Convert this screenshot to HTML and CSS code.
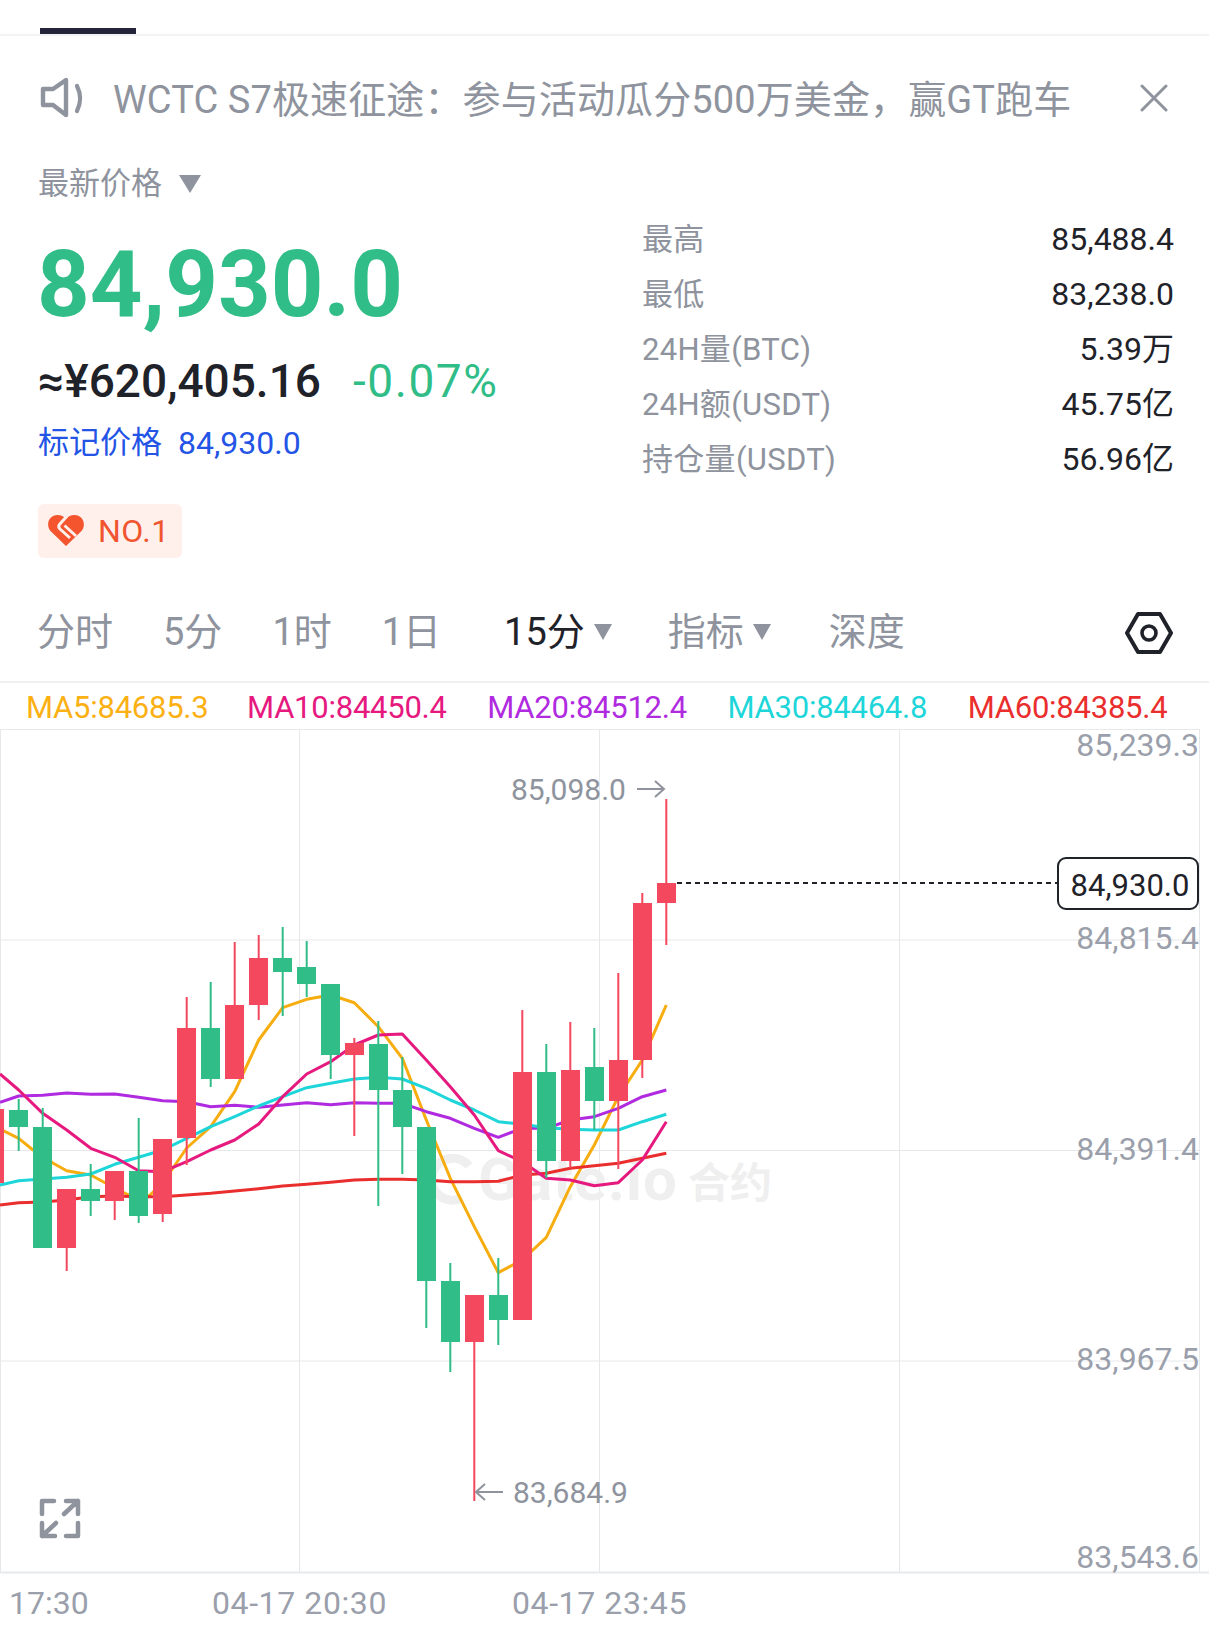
FILE: index.html
```html
<!DOCTYPE html>
<html lang="zh">
<head>
    <meta charset="UTF-8">
    <meta name="viewport" content="width=device-width, initial-scale=1.0">
    <title>BTC 合约</title>
    <link rel="stylesheet" href="styles.css">
</head>
<body>
    <div class="tab-bar"><div class="tab-indicator"></div></div>

    <div class="notice">
        <svg class="notice-icon" width="46" height="42" viewBox="0 0 46 42">
            <path d="M3 12H13L26 3V38L13 28H3z" fill="none" stroke="#8e939d" stroke-width="4.400" stroke-linejoin="round"/>
            <path d="M37 9C41 17 41 26 37 34" fill="none" stroke="#8e939d" stroke-width="4.200" stroke-linecap="round"/>
        </svg>
        <span class="notice-text">WCTC S7极速征途：参与活动瓜分500万美金，赢GT跑车</span>
        <svg class="notice-close" width="28" height="28" viewBox="0 0 28 28">
            <path d="M2 2l24 24M26 2L2 26" stroke="#8e939d" stroke-width="3" stroke-linecap="round"/>
        </svg>
    </div>

    <div class="quote">
        <div class="quote-left">
            <div class="price-label">最新价格<i class="caret caret-lg"></i></div>
            <div class="price-big">84,930.0</div>
            <div class="price-sub"><span class="price-cny">≈¥620,405.16</span><span class="price-change">-0.07%</span></div>
            <div class="price-mark"><span>标记价格</span><span class="mark-value">84,930.0</span></div>
            <div class="badge">
                <svg width="36" height="32" viewBox="0 0 36 32">
                    <path d="M18 31L3 16.500C-3 10 1 0 9.500 0C13 0 16 1.500 18 4C20 1.500 23 0 26.500 0C35 0 39 10 33 16.500z" fill="#f4552e"/>
                    <path d="M19 1L11.500 9.500C10 11.500 10.500 12.500 12 14L22 23" fill="none" stroke="#fff0eb" stroke-width="3"/>
                    <path d="M16.500 10.500L28 21" fill="none" stroke="#fff0eb" stroke-width="3"/>
                </svg>
                <span>NO.1</span>
            </div>
        </div>
        <div class="stats">
            <div class="stat-row"><span>最高</span><b>85,488.4</b></div>
            <div class="stat-row"><span>最低</span><b>83,238.0</b></div>
            <div class="stat-row"><span>24H量(BTC)</span><b>5.39万</b></div>
            <div class="stat-row"><span>24H额(USDT)</span><b>45.75亿</b></div>
            <div class="stat-row"><span>持仓量(USDT)</span><b>56.96亿</b></div>
        </div>
    </div>

    <div class="periods">
        <span>分时</span>
        <span>5分</span>
        <span>1时</span>
        <span>1日</span>
        <span class="period-active">15分<i class="caret"></i></span>
        <span class="period-indicator">指标<i class="caret"></i></span>
        <span class="period-depth">深度</span>
        <svg class="settings" width="48" height="42" viewBox="0 0 48 42">
            <path d="M13 2h22L46 21 35 40H13L2 21z" fill="none" stroke="#1f2229" stroke-width="4" stroke-linejoin="round"/>
            <circle cx="24" cy="21" r="7" fill="none" stroke="#1f2229" stroke-width="3.600"/>
        </svg>
    </div>

    <div class="ma-row">
        <span class="ma5">MA5:84685.3</span>
        <span class="ma10">MA10:84450.4</span>
        <span class="ma20">MA20:84512.4</span>
        <span class="ma30">MA30:84464.8</span>
        <span class="ma60">MA60:84385.4</span>
    </div>

    <svg class="chart" width="1209" height="902" viewBox="0 729 1209 902">
        <!-- сетка -->
        <g class="grid">
            <path d="M0 729.500H1199M0 940H1199M0 1150.500H1199M0 1361H1199"/>
            <path d="M0.500 729V1572M299.500 729V1572M599.500 729V1572M899.500 729V1572M1199.500 729V1572"/>
        </g>
        <path class="grid-bottom" d="M0 1572.500H1209"/>

        <!-- watermark -->
        <g class="watermark">
            <path d="M469 1166A21 21 0 1 0 462 1198" fill="none" stroke="#efefef" stroke-width="9"/>
            <text x="478" y="1200" class="wm-text">Gate.io</text>
            <text x="688" y="1198" class="wm-cn">合约</text>
        </g>

        <!-- MA -->
        <polyline class="ma-line l5" points="0,1129 18.700,1138.300 33,1150 42.700,1155 52.700,1163 66.700,1170.700 90.700,1175 114.700,1188 138.700,1200 150,1195 162.700,1183 186.700,1148 210.700,1126.700 234.700,1091.700 258.700,1040 282.700,1007.700 306.700,999.300 330.700,995 354.300,1002.700 378.300,1026.700 402.300,1058.300 426.300,1120 450.300,1178.300 474.300,1226.700 498.300,1272.700 522.300,1260 546.300,1237.300 570.300,1186.700 594.300,1145 618.300,1096.700 642.300,1060 666.300,1005"/>
        <polyline class="ma-line l60" points="0,1205 18.700,1202.700 42.700,1202 66.700,1200 90.700,1196.700 114.700,1196 138.700,1196.700 162.700,1196.700 186.700,1195 210.700,1193.300 234.700,1191 258.700,1188.700 282.700,1186 306.700,1184.300 330.700,1182.300 354.300,1180 378.300,1179.300 402.300,1179.300 426.300,1180 450.300,1181.700 474.300,1181.700 498.300,1181.300 522.300,1175 546.300,1173.300 570.300,1168.300 594.300,1165.700 618.300,1163.300 642.300,1158.300 666.300,1153.300"/>
        <polyline class="ma-line l20" points="0,1102.300 18.700,1096 42.700,1095.300 66.700,1093 90.700,1094.300 114.700,1094 138.700,1097.300 162.700,1100.700 186.700,1101.700 210.700,1106.700 234.700,1105.300 258.700,1107.300 282.700,1105 306.700,1102.700 330.700,1104.700 354.300,1102.700 378.300,1103.300 402.300,1103.300 426.300,1111.700 450.300,1118.300 474.300,1128.300 498.300,1137.300 522.300,1128.300 546.300,1128.300 570.300,1120 594.300,1116.700 618.300,1108.300 642.300,1096.700 666.300,1090"/>
        <polyline class="ma-line l30" points="0,1185 18.700,1180.700 42.700,1179 66.700,1177.300 90.700,1174 114.700,1164.300 138.700,1157.300 162.700,1150 186.700,1138.300 210.700,1126.700 234.700,1116.700 258.700,1106 282.700,1096.700 306.700,1087.700 330.700,1083.300 354.300,1079 378.300,1077.300 402.300,1079 426.300,1088.300 450.300,1100 474.300,1110 498.300,1121.700 522.300,1124.300 546.300,1127.700 570.300,1129.300 594.300,1130 618.300,1130 642.300,1121.700 666.300,1114.300"/>
        <polyline class="ma-line l10" points="0,1074 18.700,1090 42.700,1113.300 66.700,1130 90.700,1148.300 114.700,1157.300 138.700,1170.700 162.700,1171.700 186.700,1161.700 210.700,1150 234.700,1140 258.700,1124 282.700,1096.700 306.700,1074 330.700,1061.700 354.300,1045 378.300,1035 402.300,1034 426.300,1060 450.300,1086.700 474.300,1115 498.300,1150.700 522.300,1161.700 546.300,1178.300 570.300,1180 594.300,1185.700 618.300,1182.700 642.300,1160 666.300,1121.700"/>

        <!-- свечи -->
        <g class="up">
            <path d="M18.700 1099V1151M42.700 1108V1128M90.700 1164V1216M138.700 1118V1223M210.700 982V1087M282.700 927V1016M306.700 941V997M330.700 984V1079M378.300 1021V1206M402.300 1057V1174M426.300 1127V1328M450.300 1263V1372M498.300 1258V1345M546.300 1044V1178M594.300 1028V1130"/>
            <rect x="9" y="1110" width="19" height="17"/>
            <rect x="33" y="1127" width="19" height="121"/>
            <rect x="81" y="1189" width="19" height="12"/>
            <rect x="129" y="1171" width="19" height="45"/>
            <rect x="201" y="1028" width="19" height="51"/>
            <rect x="273" y="958" width="19" height="14"/>
            <rect x="297" y="967" width="19" height="17"/>
            <rect x="321" y="984" width="19" height="71"/>
            <rect x="369" y="1044" width="19" height="46"/>
            <rect x="393" y="1090" width="19" height="37"/>
            <rect x="417" y="1127" width="19" height="154"/>
            <rect x="441" y="1281" width="19" height="61"/>
            <rect x="489" y="1295" width="19" height="25"/>
            <rect x="537" y="1072" width="19" height="89"/>
            <rect x="585" y="1067" width="19" height="34"/>
        </g>
        <g class="down">
            <path d="M66.700 1189V1271M114.700 1171V1220M162.700 1139V1222M186.700 997V1165M234.700 942V1079M258.700 935V1020M354.300 1038V1136M474.300 1295V1501M522.300 1010V1320M570.300 1022V1168M618.300 973V1169M642.300 893V1078M666.300 799V945"/>
            <rect x="-15" y="1109" width="19" height="74"/>
            <rect x="57" y="1189" width="19" height="59"/>
            <rect x="105" y="1171" width="19" height="30"/>
            <rect x="153" y="1139" width="19" height="75"/>
            <rect x="177" y="1028" width="19" height="110"/>
            <rect x="225" y="1005" width="19" height="74"/>
            <rect x="249" y="958" width="19" height="47"/>
            <rect x="345" y="1043" width="19" height="12"/>
            <rect x="465" y="1295" width="19" height="47"/>
            <rect x="513" y="1072" width="19" height="248"/>
            <rect x="561" y="1070" width="19" height="91"/>
            <rect x="609" y="1060" width="19" height="41"/>
            <rect x="633" y="903" width="19" height="157"/>
            <rect x="657" y="883" width="19" height="20"/>
        </g>

        <!-- цена -->
        <path class="last-line" d="M677 883H1058"/>
        <rect class="last-box" x="1058" y="858" width="140" height="51" rx="8"/>
        <text class="last-text" x="1130" y="896" text-anchor="middle">84,930.0</text>

        <!-- шкала -->
        <g class="axis" text-anchor="end">
            <text x="1199" y="756">85,239.3</text>
            <text x="1199" y="949">84,815.4</text>
            <text x="1199" y="1160">84,391.4</text>
            <text x="1199" y="1370">83,967.5</text>
            <text x="1199" y="1568">83,543.6</text>
        </g>
        <g class="axis">
            <text x="9" y="1614">17:30</text>
            <text class="axis-date" x="212" y="1614">04-17 20:30</text>
            <text class="axis-date" x="512" y="1614">04-17 23:45</text>
        </g>

        <!-- экстремумы -->
        <text class="extreme" x="511" y="800">85,098.0</text>
        <path class="extreme-arrow" d="M637 789H664M655 781L664 789L655 797"/>
        <path class="extreme-arrow" d="M476 1492H503M485 1484L476 1492L485 1500"/>
        <text class="extreme" x="513" y="1503">83,684.9</text>

        <!-- fullscreen -->
        <path class="full-icon" d="M42 1514V1501H54M66 1501H78V1514M78 1501L64 1514M42 1523V1536H55M42 1536L56 1523M78 1523V1536H66"/>
    </svg>
</body>
</html>
```

FILE: styles.css
```css
* {
    box-sizing: border-box;
}
body {
    margin: 0;
    width: 1209px;
    height: 1631px;
    overflow: hidden;
    background-color: #fff;
    font-family: Roboto, 'Noto Sans CJK SC', sans-serif;
    color: #1f2229;
}
.tab-bar {
    height: 36px;
    padding: 28px 0 0 40px;
    border-bottom: 2px solid #f2f3f5;
}
.tab-indicator {
    width: 96px;
    height: 6px;
    background-color: #24243a;
}
.notice {
    display: flex;
    align-items: center;
    height: 124px;
    padding: 0 41px 0 40px;
}
.notice-icon {
    flex: none;
}
.notice-text {
    margin: 4px 0 0 27px;
    font-size: 38px;
    line-height: 50px;
    letter-spacing: 0.12px;
    color: #8e939d;
    white-space: nowrap;
}
.notice-close {
    margin-left: auto;
    flex: none;
}
.quote {
    display: flex;
    justify-content: space-between;
    height: 398px;
    padding: 0 35px 0 38px;
}
.price-label {
    display: flex;
    align-items: center;
    height: 46px;
    padding-top: 1px;
    line-height: 46px;
    font-size: 31px;
    color: #8e939d;
}
.caret {
    display: inline-block;
    width: 0;
    height: 0;
    margin-left: 9px;
    border-left: 9px solid transparent;
    border-right: 9px solid transparent;
    border-top: 16px solid #8e939d;
}
.caret-lg {
    margin-left: 17px;
    border-left-width: 11px;
    border-right-width: 11px;
    border-top-width: 18px;
}
.price-big {
    margin: 29px 0 0 -1px;
    height: 100px;
    line-height: 100px;
    font-size: 92px;
    font-weight: 700;
    color: #30bd87;
}
.price-sub {
    display: flex;
    gap: 32px;
    margin-top: 16px;
    height: 60px;
    line-height: 60px;
    font-size: 46px;
}
.price-cny {
    font-weight: 500;
}
.price-change {
    letter-spacing: 1.6px;
    color: #30bd87;
}
.price-mark {
    display: flex;
    gap: 16px;
    margin-top: 10px;
    height: 44px;
    line-height: 44px;
    font-size: 31px;
    color: #2354e6;
}
.mark-value {
    font-size: 32px;
}
.badge {
    display: inline-flex;
    align-items: center;
    gap: 14px;
    margin-top: 39px;
    width: 144px;
    height: 54px;
    padding-left: 10px;
    border-radius: 6px;
    background-color: #fff0eb;
    font-size: 32px;
    line-height: 54px;
    letter-spacing: 0.5px;
    color: #f0552f;
}
.stats {
    width: 532px;
    padding-top: 52px;
}
.stat-row {
    display: flex;
    justify-content: space-between;
    height: 55px;
    line-height: 55px;
    font-size: 31px;
    letter-spacing: 0.3px;
    color: #8e939d;
}
.stat-row b {
    font-weight: 400;
    font-size: 32px;
    letter-spacing: 0;
    color: #1f2229;
}
.periods {
    display: flex;
    align-items: center;
    gap: 50px;
    height: 125px;
    padding: 25px 36px 0 37px;
    border-bottom: 2px solid #f0f0f0;
    font-size: 38px;
    color: #8e939d;
}
.periods span {
    display: flex;
    align-items: center;
    line-height: 50px;
}
.period-active {
    margin-left: 13px;
    color: #1f2229;
}
.period-indicator {
    margin-left: 6px;
}
.period-depth {
    margin-left: 8px;
}
.settings {
    margin-left: auto;
    margin-top: 2px;
}
.ma-row {
    display: flex;
    gap: 40.6px;
    height: 46px;
    padding: 2px 0 0 26px;
    font-size: 31px;
    line-height: 46px;
    letter-spacing: -0.25px;
}
.ma-row span {
    flex: none;
    white-space: nowrap;
}
.ma5 { color: #fbb013; }
.ma10 {
    margin-left: -2px;
    color: #e6197f;
}
.ma20 { color: #b02be0; }
.ma30 { color: #1ed6d9; }
.ma60 { color: #ea2e2e; }
.chart {
    display: block;
    overflow: visible;
}
.grid path {
    stroke: #e7e8ea;
    stroke-width: 1;
    fill: none;
}
.grid-bottom {
    stroke: #e8e9eb;
    stroke-width: 2;
}
.wm-text {
    font-size: 60px;
    font-weight: 700;
    letter-spacing: 1px;
    fill: #efefef;
}
.wm-cn {
    font-size: 42px;
    font-weight: 700;
    fill: #efefef;
}
.ma-line {
    fill: none;
    stroke-width: 3;
    stroke-linejoin: round;
}
.l5 { stroke: #f7ad0f; }
.l10 { stroke: #e6197f; }
.l20 { stroke: #b02be0; }
.l30 { stroke: #1ed6d9; }
.l60 { stroke: #ea2e2e; }
.up rect { fill: #30bd87; }
.up path { stroke: #30bd87; stroke-width: 2; }
.down rect { fill: #f4485f; }
.down path { stroke: #f4485f; stroke-width: 2; }
.last-line {
    stroke: #1f2229;
    stroke-width: 2;
    stroke-dasharray: 5 4;
}
.last-box {
    fill: #fff;
    stroke: #1f2229;
    stroke-width: 2;
}
.last-text {
    font-size: 31px;
    fill: #1f2229;
}
.axis text {
    font-size: 32px;
    fill: #9a9fab;
}
.axis .axis-date {
    letter-spacing: 0.6px;
}
.extreme {
    font-size: 30px;
    fill: #8e939d;
}
.extreme-arrow {
    fill: none;
    stroke: #8e939d;
    stroke-width: 2;
}
.full-icon {
    fill: none;
    stroke: #8e939d;
    stroke-width: 4.500;
    stroke-linejoin: round;
    stroke-linecap: round;
}
```
